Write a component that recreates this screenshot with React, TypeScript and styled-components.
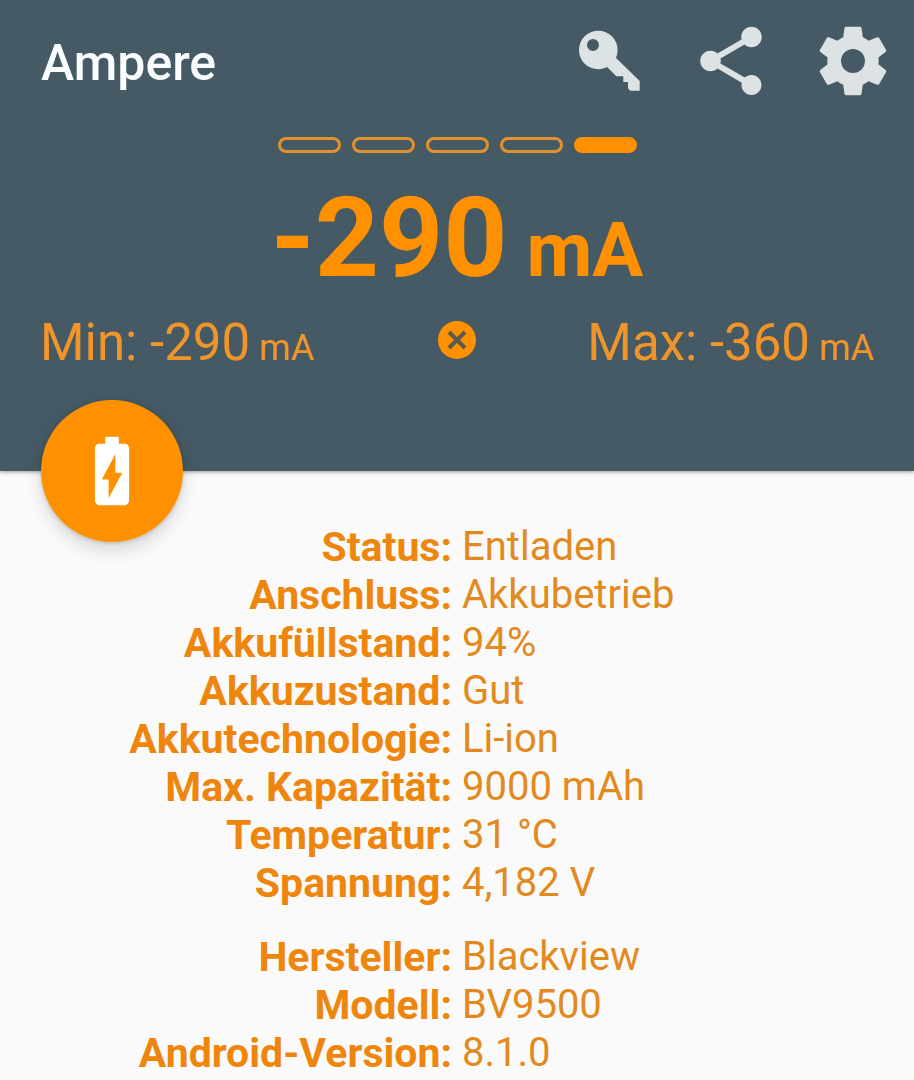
import React from "react";
import styled, { createGlobalStyle } from "styled-components";

const SLATE = "#455a64";
const ORANGE = "#ff9100";

const GlobalStyle = createGlobalStyle`
  *, *::before, *::after { box-sizing: border-box; }
  body {
    margin: 0;
    background: #fafafa;
    font-family: Roboto, "Liberation Sans", sans-serif;
  }
`;

const Header = styled.header`
  position: relative;
  padding-bottom: 98px;
  background: ${SLATE};
  color: ${ORANGE};
  box-shadow: 0 1px 4px rgba(0, 0, 0, 0.4);
`;

const Toolbar = styled.div`
  display: flex;
  align-items: center;
  justify-content: space-between;
  padding: 20px 20px 0 41px;
`;

const Title = styled.h1`
  margin: 0;
  padding-top: 4px;
  font-size: 50px;
  line-height: 60px;
  font-weight: 500;
  color: #fafdff;
`;

const Actions = styled.div`
  display: flex;
  gap: 40px;
`;

const IconButton = styled.button`
  display: flex;
  padding: 0;
  border: 0;
  background: none;
  color: #dde3e5;
  cursor: pointer;
`;

const Icon = styled.svg`
  display: block;
  width: 82px;
  height: 82px;
  fill: currentColor;
`;

const Level = styled.div`
  display: flex;
  justify-content: center;
  gap: 11px;
  margin-top: 35px;
`;

const Segment = styled.span<{ $filled: boolean }>`
  width: 63px;
  height: 16px;
  border: 3px solid ${(p) => (p.$filled ? ORANGE : "#e0922f")};
  border-radius: 8px;
  background: ${(p) => (p.$filled ? ORANGE : "transparent")};
`;

const Current = styled.p`
  margin: 29px 0 0;
  text-align: center;
  font-size: 112px;
  line-height: 112px;
  font-weight: 700;
`;

const CurrentUnit = styled.span`
  font-size: 76px;
  line-height: 76px;
`;

const Range = styled.div`
  display: grid;
  grid-template-columns: 1fr auto 1fr;
  align-items: center;
  margin-top: 19px;
  padding: 0 40px;
`;

const Extreme = styled.p<{ $end?: boolean }>`
  margin: 0;
  text-align: ${(p) => (p.$end ? "right" : "left")};
  white-space: nowrap;
  font-size: 51px;
  line-height: 60px;
  color: #f0952a;
`;

const ExtremeUnit = styled.span`
  font-size: 36px;
  line-height: 36px;
`;

const ResetButton = styled.button`
  display: flex;
  width: 38px;
  height: 38px;
  margin-bottom: 6px;
  padding: 0;
  border: 0;
  border-radius: 50%;
  background: ${ORANGE};
  cursor: pointer;
`;

const Cross = styled.svg`
  width: 38px;
  height: 38px;
  stroke: #5b5a4c;
  stroke-width: 4;
`;

const BatteryButton = styled.button`
  position: absolute;
  left: 41px;
  bottom: -71px;
  display: flex;
  align-items: center;
  justify-content: center;
  width: 142px;
  height: 142px;
  padding: 0;
  border: 0;
  border-radius: 50%;
  background: ${ORANGE};
  color: #fff;
  box-shadow: 0 8px 18px rgba(0, 0, 0, 0.14), 0 1px 4px rgba(0, 0, 0, 0.16);
  cursor: pointer;
`;

const Details = styled.main`
  display: grid;
  gap: 26px;
  padding-top: 52px;
`;

const Group = styled.dl`
  margin: 0;
`;

const Row = styled.div`
  display: grid;
  grid-template-columns: 1fr 1fr;
  column-gap: 10px;
  line-height: 48px;
`;

const Label = styled.dt`
  text-align: right;
  font-size: 41px;
  font-weight: 700;
  color: #ee860d;
`;

const Value = styled.dd`
  margin: 0;
  font-size: 40px;
  color: #e28a20;
`;

const batteryRows: [string, string][] = [
  ["Status", "Entladen"],
  ["Anschluss", "Akkubetrieb"],
  ["Akkufüllstand", "94%"],
  ["Akkuzustand", "Gut"],
  ["Akkutechnologie", "Li-ion"],
  ["Max. Kapazität", "9000 mAh"],
  ["Temperatur", "31 °C"],
  ["Spannung", "4,182 V"],
];

const deviceRows: [string, string][] = [
  ["Hersteller", "Blackview"],
  ["Modell", "BV9500"],
  ["Android-Version", "8.1.0"],
];

function InfoGroup({ rows }: { rows: [string, string][] }) {
  return (
    <Group>
      {rows.map(([label, value]) => (
        <Row key={label}>
          <Label>{label}:</Label>
          <Value>{value}</Value>
        </Row>
      ))}
    </Group>
  );
}

export default function App() {
  return (
    <>
      <GlobalStyle />
      <Header>
        <Toolbar>
          <Title>Ampere</Title>
          <Actions>
            <IconButton aria-label="Pro freischalten">
              <Icon viewBox="-1 0 82 82">
                <path
                  fillRule="evenodd"
                  d="M29.3 10.7a19.3 19.3 0 1 0 0 38.6a19.3 19.3 0 1 0 0-38.6ZM24 19a6 6 0 1 0 0 12a6 6 0 1 0 0-12Z"
                />
                <path d="M46 37L70.7 61V70.7H61.3L59 68.3V62H54.3V56.3H47.3L37 46Z" />
              </Icon>
            </IconButton>
            <IconButton aria-label="Teilen">
              <Icon viewBox="0 0 24 24">
                <path d="M18 16.08c-.76 0-1.44.3-1.96.77L8.91 12.7c.05-.23.09-.46.09-.7s-.04-.47-.09-.7l7.05-4.11c.54.5 1.25.81 2.04.81 1.66 0 3-1.34 3-3s-1.34-3-3-3-3 1.34-3 3c0 .24.04.47.09.7L8.04 9.81C7.5 9.31 6.79 9 6 9c-1.66 0-3 1.34-3 3s1.34 3 3 3c.79 0 1.5-.31 2.04-.81l7.12 4.16c-.05.21-.08.43-.08.65 0 1.61 1.31 2.92 2.92 2.92s2.92-1.31 2.92-2.92-1.31-2.92-2.92-2.92z" />
              </Icon>
            </IconButton>
            <IconButton aria-label="Einstellungen">
              <Icon viewBox="0 0 24 24">
                <path d="M12,15.5A3.5,3.5 0 0,1 8.5,12A3.5,3.5 0 0,1 12,8.5A3.5,3.5 0 0,1 15.5,12A3.5,3.5 0 0,1 12,15.5M19.43,12.97C19.47,12.65 19.5,12.33 19.5,12C19.5,11.67 19.47,11.34 19.43,11L21.54,9.37C21.73,9.22 21.78,8.95 21.66,8.73L19.66,5.27C19.54,5.05 19.27,4.96 19.05,5.05L16.56,6.05C16.04,5.66 15.5,5.32 14.87,5.07L14.5,2.42C14.46,2.18 14.25,2 14,2H10C9.75,2 9.54,2.18 9.5,2.42L9.13,5.07C8.5,5.32 7.96,5.66 7.44,6.05L4.95,5.05C4.73,4.96 4.46,5.05 4.34,5.27L2.34,8.73C2.21,8.95 2.27,9.22 2.46,9.37L4.57,11C4.53,11.34 4.5,11.67 4.5,12C4.5,12.33 4.53,12.65 4.57,12.97L2.46,14.63C2.27,14.78 2.21,15.05 2.34,15.27L4.34,18.73C4.46,18.95 4.73,19.03 4.95,18.95L7.44,17.94C7.96,18.34 8.5,18.68 9.13,18.93L9.5,21.58C9.54,21.82 9.75,22 10,22H14C14.25,22 14.46,21.82 14.5,21.58L14.87,18.93C15.5,18.67 16.04,18.34 16.56,17.94L19.05,18.95C19.27,19.03 19.54,18.95 19.66,18.73L21.66,15.27C21.78,15.05 21.73,14.78 21.54,14.63L19.43,12.97Z" />
              </Icon>
            </IconButton>
          </Actions>
        </Toolbar>

        <Level aria-hidden="true">
          {[false, false, false, false, true].map((filled, i) => (
            <Segment key={i} $filled={filled} />
          ))}
        </Level>

        <Current>
          -290<CurrentUnit> mA</CurrentUnit>
        </Current>

        <Range>
          <Extreme>
            Min: -290<ExtremeUnit> mA</ExtremeUnit>
          </Extreme>
          <ResetButton aria-label="Zurücksetzen">
            <Cross viewBox="0 0 38 38">
              <path d="M11 11L27 27M27 11L11 27" />
            </Cross>
          </ResetButton>
          <Extreme $end>
            Max: -360<ExtremeUnit> mA</ExtremeUnit>
          </Extreme>
        </Range>

        <BatteryButton aria-label="Akku">
          <Icon viewBox="0 0 24 24">
            <path d="M15.67 4H14V2h-4v2H8.33C7.6 4 7 4.6 7 5.33v15.33C7 21.4 7.6 22 8.33 22h7.33c.74 0 1.34-.6 1.34-1.33V5.33C17 4.6 16.4 4 15.67 4zM11 20v-5.5H9L13 7v5.5h2L11 20z" />
          </Icon>
        </BatteryButton>
      </Header>

      <Details>
        <InfoGroup rows={batteryRows} />
        <InfoGroup rows={deviceRows} />
      </Details>
    </>
  );
}
